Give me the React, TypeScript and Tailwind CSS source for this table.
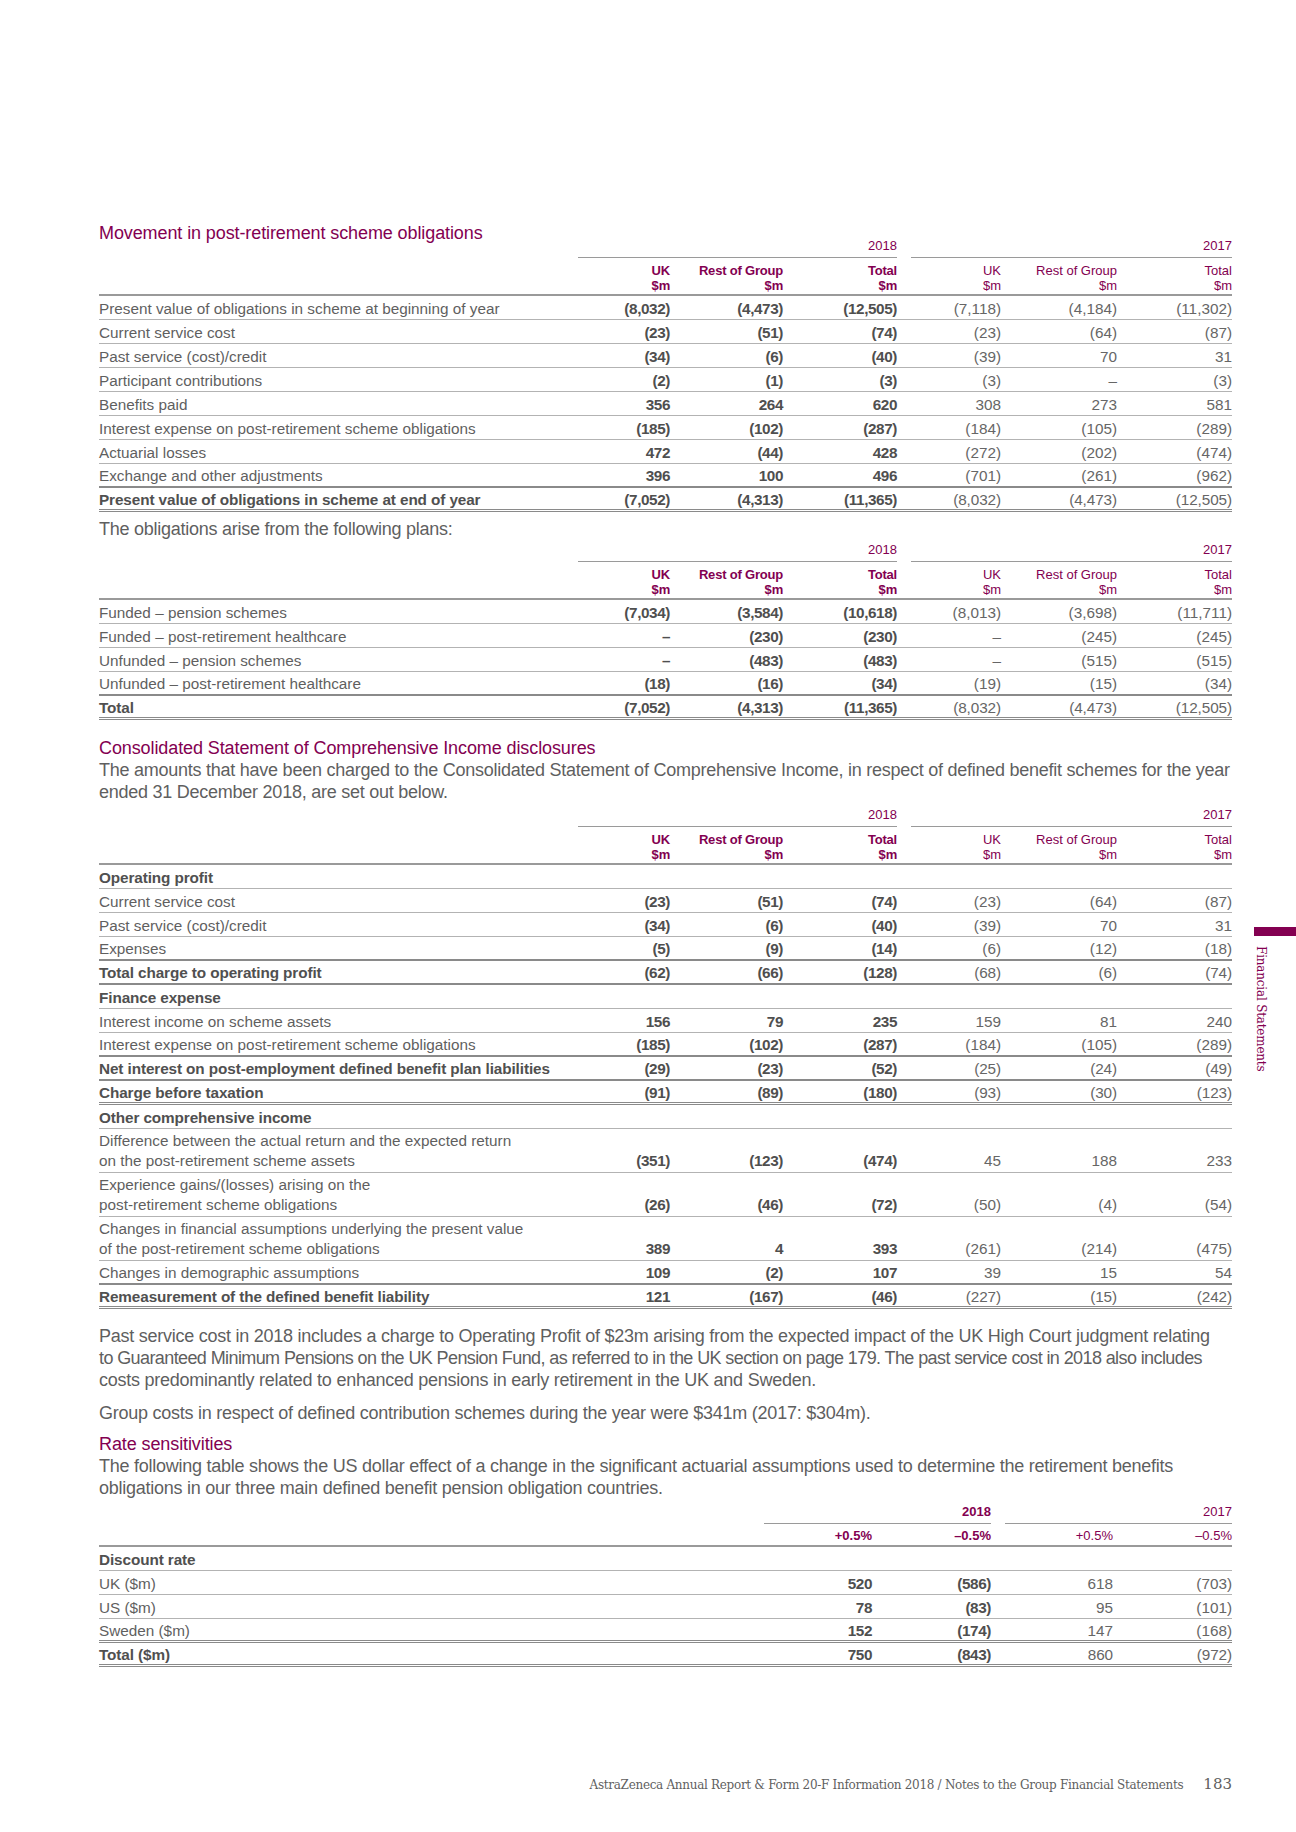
import React from "react";

const MAG = "text-[#830051]";

type Row = {
  label: string | string[];
  v?: string[];
  kind?: "normal" | "bold" | "sub";
  line?: "thin" | "thick" | "double";
};

const sixCols = "grid-cols-[479px_92px_113px_114px_14px_90px_116px_115px]";

function lineClass(line?: string) {
  if (line === "double") return "border-b-[3px] border-double border-[#8a8a8a]";
  if (line === "thick") return "border-b-2 border-[#8a8a8a]";
  return "border-b border-[#b3b3b3]";
}

function SixHeader() {
  return (
    <div>
      <div className={`grid ${sixCols} text-[13px] leading-[14px]`}>
        <div />
        <div className={`col-span-3 text-right ${MAG} pb-[4px] border-b border-[#9a9a9a]`}>2018</div>
        <div />
        <div className={`col-span-3 text-right ${MAG} pb-[4px] border-b border-[#9a9a9a]`}>2017</div>
      </div>
      <div className={`grid ${sixCols} text-[13px] leading-[15px] pt-[5px] pb-[1px] border-b-2 border-[#9a9a9a]`}>
        <div />
        {["UK", "Rest of Group", "Total"].map((a, i) => (
          <div key={i} className={`text-right ${MAG} font-bold tracking-[-0.2px]`}>
            <div>{a}</div>
            <div>$m</div>
          </div>
        ))}
        <div />
        {["UK", "Rest of Group", "Total"].map((a, i) => (
          <div key={i} className={`text-right ${MAG}`}>
            <div>{a}</div>
            <div>$m</div>
          </div>
        ))}
      </div>
    </div>
  );
}

const B = "text-right font-bold text-[#4f4f4f] tracking-[-0.4px]";
const N = "text-right font-normal text-[#666]";

function SixRow({ r }: { r: Row }) {
  const bold = r.kind === "bold";
  const sub = r.kind === "sub";
  const twoLine = Array.isArray(r.label);
  return (
    <div
      className={`grid ${sixCols} items-end text-[15.3px] leading-[20px] ${lineClass(r.line)} ${
        twoLine ? "pt-[2px] pb-[1px]" : "h-[24px] pt-[2px]"
      } ${bold || sub ? "font-bold text-[#505050] tracking-[-0.1px]" : "text-[#5f5f5f]"}`}
    >
      <div>
        {twoLine ? (r.label as string[]).map((l, i) => <div key={i}>{l}</div>) : (r.label as string)}
      </div>
      {r.v && (
        <>
          <div className={B}>{r.v[0]}</div>
          <div className={B}>{r.v[1]}</div>
          <div className={B}>{r.v[2]}</div>
          <div />
          <div className={N}>{r.v[3]}</div>
          <div className={N}>{r.v[4]}</div>
          <div className={N}>{r.v[5]}</div>
        </>
      )}
    </div>
  );
}

const t1: Row[] = [
  { label: "Present value of obligations in scheme at beginning of year", v: ["(8,032)", "(4,473)", "(12,505)", "(7,118)", "(4,184)", "(11,302)"] },
  { label: "Current service cost", v: ["(23)", "(51)", "(74)", "(23)", "(64)", "(87)"] },
  { label: "Past service (cost)/credit", v: ["(34)", "(6)", "(40)", "(39)", "70", "31"] },
  { label: "Participant contributions", v: ["(2)", "(1)", "(3)", "(3)", "–", "(3)"] },
  { label: "Benefits paid", v: ["356", "264", "620", "308", "273", "581"] },
  { label: "Interest expense on post-retirement scheme obligations", v: ["(185)", "(102)", "(287)", "(184)", "(105)", "(289)"] },
  { label: "Actuarial losses", v: ["472", "(44)", "428", "(272)", "(202)", "(474)"] },
  { label: "Exchange and other adjustments", v: ["396", "100", "496", "(701)", "(261)", "(962)"], line: "thick" },
  { label: "Present value of obligations in scheme at end of year", v: ["(7,052)", "(4,313)", "(11,365)", "(8,032)", "(4,473)", "(12,505)"], kind: "bold", line: "double" },
];

const t2: Row[] = [
  { label: "Funded – pension schemes", v: ["(7,034)", "(3,584)", "(10,618)", "(8,013)", "(3,698)", "(11,711)"] },
  { label: "Funded – post-retirement healthcare", v: ["–", "(230)", "(230)", "–", "(245)", "(245)"] },
  { label: "Unfunded – pension schemes", v: ["–", "(483)", "(483)", "–", "(515)", "(515)"] },
  { label: "Unfunded – post-retirement healthcare", v: ["(18)", "(16)", "(34)", "(19)", "(15)", "(34)"], line: "thick" },
  { label: "Total", v: ["(7,052)", "(4,313)", "(11,365)", "(8,032)", "(4,473)", "(12,505)"], kind: "bold", line: "double" },
];

const t3: Row[] = [
  { label: "Operating profit", kind: "sub" },
  { label: "Current service cost", v: ["(23)", "(51)", "(74)", "(23)", "(64)", "(87)"] },
  { label: "Past service (cost)/credit", v: ["(34)", "(6)", "(40)", "(39)", "70", "31"] },
  { label: "Expenses", v: ["(5)", "(9)", "(14)", "(6)", "(12)", "(18)"], line: "thick" },
  { label: "Total charge to operating profit", v: ["(62)", "(66)", "(128)", "(68)", "(6)", "(74)"], kind: "bold", line: "thick" },
  { label: "Finance expense", kind: "sub" },
  { label: "Interest income on scheme assets", v: ["156", "79", "235", "159", "81", "240"] },
  { label: "Interest expense on post-retirement scheme obligations", v: ["(185)", "(102)", "(287)", "(184)", "(105)", "(289)"], line: "thick" },
  { label: "Net interest on post-employment defined benefit plan liabilities", v: ["(29)", "(23)", "(52)", "(25)", "(24)", "(49)"], kind: "bold", line: "thick" },
  { label: "Charge before taxation", v: ["(91)", "(89)", "(180)", "(93)", "(30)", "(123)"], kind: "bold", line: "double" },
  { label: "Other comprehensive income", kind: "sub" },
  { label: ["Difference between the actual return and the expected return", "on the post-retirement scheme assets"], v: ["(351)", "(123)", "(474)", "45", "188", "233"] },
  { label: ["Experience gains/(losses) arising on the", "post-retirement scheme obligations"], v: ["(26)", "(46)", "(72)", "(50)", "(4)", "(54)"] },
  { label: ["Changes in financial assumptions underlying the present value", "of the post-retirement scheme obligations"], v: ["389", "4", "393", "(261)", "(214)", "(475)"] },
  { label: "Changes in demographic assumptions", v: ["109", "(2)", "107", "39", "15", "54"], line: "thick" },
  { label: "Remeasurement of the defined benefit liability", v: ["121", "(167)", "(46)", "(227)", "(15)", "(242)"], kind: "bold", line: "double" },
];

const fourCols = "grid-cols-[665px_108px_119px_14px_108px_119px]";

const t4: Row[] = [
  { label: "Discount rate", kind: "sub", line: "thin" },
  { label: "UK ($m)", v: ["520", "(586)", "618", "(703)"] },
  { label: "US ($m)", v: ["78", "(83)", "95", "(101)"] },
  { label: "Sweden ($m)", v: ["152", "(174)", "147", "(168)"], line: "double" },
  { label: "Total ($m)", v: ["750", "(843)", "860", "(972)"], kind: "bold", line: "double" },
];

function FourRow({ r }: { r: Row }) {
  const bold = r.kind === "bold" || r.kind === "sub";
  return (
    <div
      className={`grid ${fourCols} items-end h-[24px] pt-[2px] text-[15.3px] leading-[20px] ${lineClass(r.line)} ${
        bold ? "font-bold text-[#505050] tracking-[-0.1px]" : "text-[#5f5f5f]"
      }`}
    >
      <div>{r.label as string}</div>
      {r.v && (
        <>
          <div className={B}>{r.v[0]}</div>
          <div className={B}>{r.v[1]}</div>
          <div />
          <div className={N}>{r.v[2]}</div>
          <div className={N}>{r.v[3]}</div>
        </>
      )}
    </div>
  );
}

const PBASE = "text-[18px] leading-[22px] text-[#5f5f5f]";
const P = `${PBASE} tracking-[-0.25px]`;
const H = `text-[18px] leading-[22px] ${MAG} tracking-[-0.1px]`;

export default function App() {
  return (
    <div className="relative w-[1296px] h-[1832px] bg-white font-['Liberation_Sans',Arial,sans-serif] overflow-hidden">
      <div className="absolute top-[927px] right-0 w-[42px] h-[9px] bg-[#830051]" />
      <div className="absolute top-[946px] left-[1252px] [writing-mode:vertical-rl] font-['DejaVu_Serif',serif] text-[12px] text-[#830051] tracking-[-0.2px]">
        Financial Statements
      </div>

      <div className="pl-[99px] w-[1232px] pt-[222px]">
        <h2 className={H}>Movement in post-retirement scheme obligations</h2>
        <div className="mt-[-5px]">
          <SixHeader />
          {t1.map((r, i) => (
            <SixRow key={i} r={r} />
          ))}
        </div>
        <p className={`${P} mt-[6px]`}>The obligations arise from the following plans:</p>
        <div className="mt-[3px]">
          <SixHeader />
          {t2.map((r, i) => (
            <SixRow key={i} r={r} />
          ))}
        </div>

        <h2 className={`${H} mt-[17px]`}>Consolidated Statement of Comprehensive Income disclosures</h2>
        <p className={P}>
          The amounts that have been charged to the Consolidated Statement of Comprehensive Income, in respect of defined benefit schemes for the year ended 31 December 2018, are set out below.
        </p>
        <div className="mt-[5px]">
          <SixHeader />
          {t3.map((r, i) => (
            <SixRow key={i} r={r} />
          ))}
        </div>

        <p className={`${PBASE} mt-[16px]`}>
          <span className="block whitespace-nowrap tracking-[-0.25px]">
            Past service cost in 2018 includes a charge to Operating Profit of $23m arising from the expected impact of the UK High Court judgment relating
          </span>
          <span className="block whitespace-nowrap tracking-[-0.6px]">
            to Guaranteed Minimum Pensions on the UK Pension Fund, as referred to in the UK section on page 179. The past service cost in 2018 also includes
          </span>
          <span className="block whitespace-nowrap tracking-[-0.25px]">
            costs predominantly related to enhanced pensions in early retirement in the UK and Sweden.
          </span>
        </p>
        <p className={`${P} mt-[11px]`}>
          Group costs in respect of defined contribution schemes during the year were $341m (2017: $304m).
        </p>
        <h2 className={`${H} mt-[9px]`}>Rate sensitivities</h2>
        <p className={P}>
          The following table shows the US dollar effect of a change in the significant actuarial assumptions used to determine the retirement benefits obligations in our three main defined benefit pension obligation countries.
        </p>
        <div className="mt-[6px]">
          <div className={`grid ${fourCols} text-[13px] leading-[14px]`}>
            <div />
            <div className={`col-span-2 text-right font-bold ${MAG} pb-[4px] border-b border-[#9a9a9a]`}>2018</div>
            <div />
            <div className={`col-span-2 text-right ${MAG} pb-[4px] border-b border-[#9a9a9a]`}>2017</div>
          </div>
          <div className={`grid ${fourCols} text-[13px] leading-[15px] pt-[4px] pb-[2px] border-b-2 border-[#9a9a9a]`}>
            <div />
            <div className={`text-right font-bold ${MAG}`}>+0.5%</div>
            <div className={`text-right font-bold ${MAG}`}>–0.5%</div>
            <div />
            <div className={`text-right ${MAG}`}>+0.5%</div>
            <div className={`text-right ${MAG}`}>–0.5%</div>
          </div>
          {t4.map((r, i) => (
            <FourRow key={i} r={r} />
          ))}
        </div>
      </div>

      <div className="absolute top-[1773px] left-0 w-[1232px] flex justify-end items-baseline gap-[20px] text-[#5f5f5f]">
        <span className="font-['DejaVu_Serif',serif] text-[12px] tracking-[-0.3px]">
          AstraZeneca Annual Report &amp; Form 20-F Information 2018 / Notes to the Group Financial Statements
        </span>
        <span className="font-['DejaVu_Serif',serif] text-[15px]">183</span>
      </div>
    </div>
  );
}
